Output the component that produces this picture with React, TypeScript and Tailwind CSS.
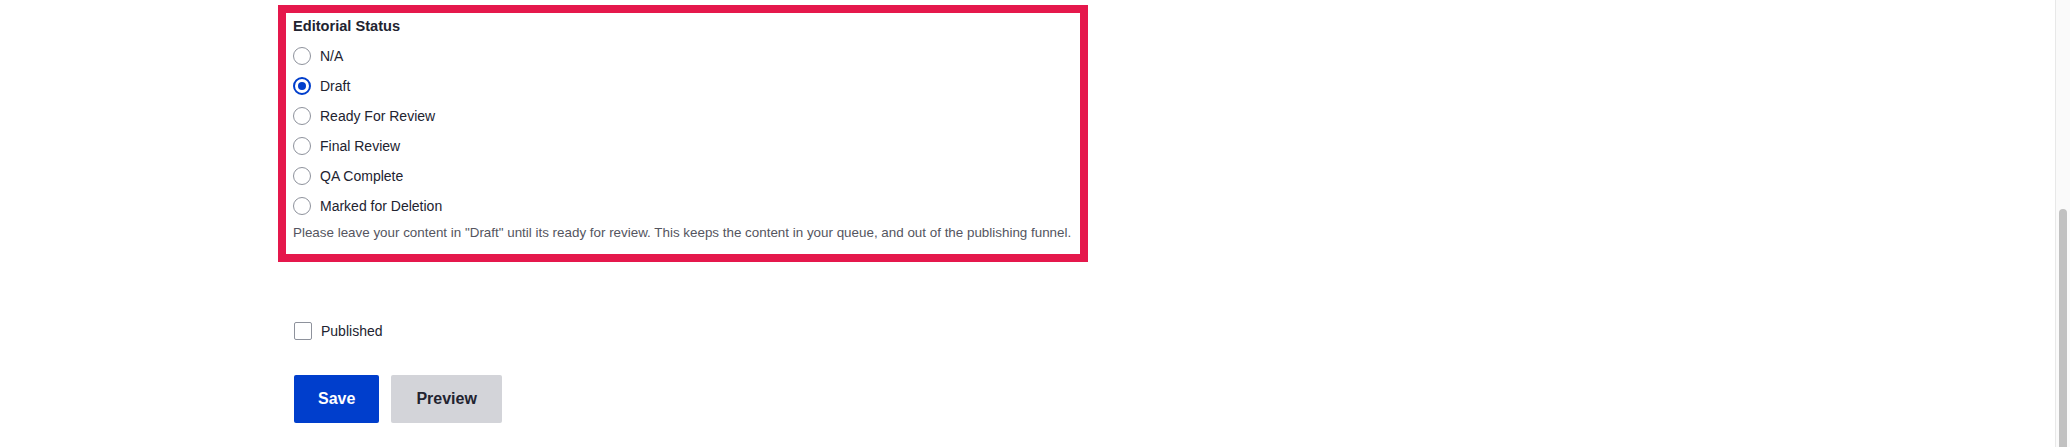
import React from "react";

const options = [
  "N/A",
  "Draft",
  "Ready For Review",
  "Final Review",
  "QA Complete",
  "Marked for Deletion",
];

function Radio({ checked }: { checked: boolean }) {
  if (checked) {
    return (
      <span className="w-[18px] h-[18px] shrink-0 rounded-full border-2 border-[#003ecc] bg-white flex items-center justify-center">
        <span className="w-[8px] h-[8px] rounded-full bg-[#003ecc]" />
      </span>
    );
  }
  return <span className="w-[18px] h-[18px] shrink-0 rounded-full border border-[#8e929c] bg-white" />;
}

export default function App() {
  return (
    <div
      className="flex w-full h-[447px] overflow-hidden bg-white text-[#222330]"
      style={{ fontFamily: '"Liberation Sans", Arial, sans-serif' }}
    >
      <div className="flex-1 pl-[278px] pt-[5px]">
        <div className="w-[810px] border-8 border-[#e5184c] pl-[7px] pt-[4px] pb-[12px]">
          <div className="text-[14.6px] leading-[18px] font-bold">Editorial Status</div>
          <div className="mt-[6px] flex flex-col">
            {options.map((o) => (
              <div key={o} className="h-[30px] flex items-center gap-[9px]">
                <Radio checked={o === "Draft"} />
                <span className="text-[14px] leading-[18px]">{o}</span>
              </div>
            ))}
          </div>
          <div className="mt-[3px] text-[13.4px] leading-[18px] text-[#545560]">
            Please leave your content in "Draft" until its ready for review. This keeps the content in your queue, and out of the publishing funnel.
          </div>
        </div>
        <div className="pl-[16px]">
          <div className="mt-[60px] h-[18px] flex items-center gap-[9px]">
            <span className="w-[18px] h-[18px] shrink-0 rounded-[2px] border border-[#8e929c] bg-white" />
            <span className="text-[14px] leading-[18px]">Published</span>
          </div>
          <div className="mt-[35px] flex gap-[12px]">
            <button className="h-[48px] px-[24px] rounded-[2px] bg-[#003ecc] text-white text-[16px] font-bold">
              Save
            </button>
            <button className="h-[48px] px-[25px] rounded-[2px] bg-[#d3d4d9] text-[#222330] text-[16px] font-bold">
              Preview
            </button>
          </div>
        </div>
      </div>
      <div className="w-[15px] h-[447px] shrink-0 bg-[#fafafa] border-l border-[#e8e8e8] pl-[3px] overflow-hidden">
        <div className="mt-[209px] w-[8px] h-[260px] rounded-full bg-[#c1c1c1]" />
      </div>
    </div>
  );
}
